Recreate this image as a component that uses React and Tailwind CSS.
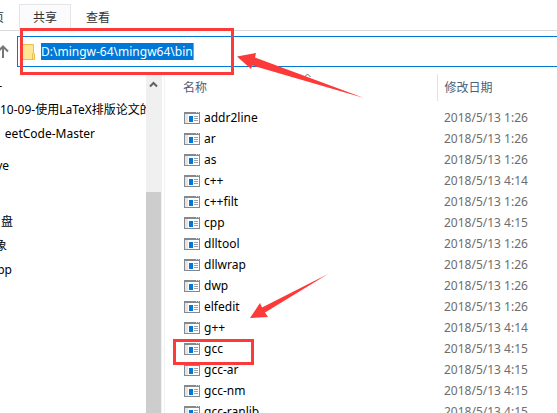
import React from 'react';

const files = [
  ['addr2line', '1:26'],
  ['ar', '1:26'],
  ['as', '1:26'],
  ['c++', '4:14'],
  ['c++filt', '1:26'],
  ['cpp', '4:15'],
  ['dlltool', '1:26'],
  ['dllwrap', '1:26'],
  ['dwp', '1:26'],
  ['elfedit', '1:26'],
  ['g++', '4:14'],
  ['gcc', '4:15'],
  ['gcc-ar', '4:15'],
  ['gcc-nm', '4:15'],
  ['gcc-ranlib', '4:15'],
];

function AppIcon() {
  return (
    <svg className="h-3 w-4 shrink-0" viewBox="0 0 16 12" shapeRendering="crispEdges" aria-hidden="true">
      <path fill="#83898e" d="M0 0h16v12H0z" />
      <path fill="#fff" d="M1 2h14v9H1z" />
      <path fill="#e3e5e7" d="M1 2h3v9H1z" />
      <path fill="#d5d8da" d="M12 0h1v1h-1zM14 0h1v1h-1z" />
      <path fill="#0078d7" d="M5 4h4v6H5z" />
      <path fill="#9da1a4" d="M10 4h4v1h-4zM10 6h4v1h-4zM10 8h4v1h-4z" />
    </svg>
  );
}

function FolderIcon() {
  return (
    <svg className="h-4 w-3 shrink-0" viewBox="0 0 12 16" aria-hidden="true">
      <path fill="#ffe694" d="M0 0h10v9h1v7H0z" />
      <path fill="none" stroke="#e8c14d" d="M0 .5h10.5v8.5l1 1v5.5H0M9.5 15V9.5h1" />
    </svg>
  );
}

function Ribbon() {
  return (
    <nav className="flex h-[31px] shrink-0 items-end border-b border-[#dadbdc] text-[#333]">
      <button className="flex h-[25px] w-[19px] items-center justify-end overflow-hidden pr-[15px] whitespace-nowrap">
        页
      </button>
      <button className="-mb-px flex h-[27px] w-[52px] items-center justify-center border border-b-0 border-[#e4e5e6] bg-[#fbfbfd]">
        共享
      </button>
      <button className="flex h-[25px] w-[54px] items-center justify-center">查看</button>
    </nav>
  );
}

function AddressBar() {
  return (
    <div className="flex shrink-0 pt-[5px]">
      <button aria-label="上移" className="flex w-[17px] shrink-0 items-center">
        <svg className="h-3.5 w-2.5" viewBox="0 0 10 14" fill="none" stroke="#777" strokeWidth="2" aria-hidden="true">
          <path d="M3 13V2M-2 6.5 3 1.5l5 5" />
        </svg>
      </button>
      <div className="flex h-[31px] grow items-center border border-r-0 border-[#0078d7] pl-[5px]">
        <FolderIcon />
        <input
          aria-label="地址"
          readOnly
          value="D:\mingw-64\mingw64\bin"
          className="ml-1.5 h-[17px] field-sizing-content border-r border-[#e38b3c] bg-[#0078d7] text-white outline-none"
        />
      </div>
    </div>
  );
}

function TreeItem({ width, children }) {
  return (
    <li className={`${width} flex h-6 items-center justify-end overflow-hidden whitespace-nowrap`}>{children}</li>
  );
}

function Sidebar() {
  return (
    <aside className="flex w-[165px] shrink-0 border-r border-[#f3f3f3]">
      <ul className="w-[146px] text-black">
        <TreeItem width="w-0.5">-</TreeItem>
        <li className="flex h-6 items-center overflow-hidden whitespace-nowrap">10-09-使用LaTeX排版论文的</li>
        <TreeItem width="w-[95px]">eetCode-Master</TreeItem>
        <li className="h-2" />
        <TreeItem width="w-[9px]">ve</TreeItem>
        <li className="h-8" />
        <TreeItem width="w-[13px]">盘</TreeItem>
        <TreeItem width="w-[7px]">象</TreeItem>
        <TreeItem width="w-3">pp</TreeItem>
      </ul>
      <div className="flex w-4 flex-col bg-[#f0f0f0] pr-px">
        <svg className="mx-auto mt-1.5 h-28 w-[9px]" viewBox="0 0 9 112" fill="none" stroke="#606060" strokeWidth="2" aria-hidden="true">
          <path d="M1 6.500 4.500 3 8 6.500" />
        </svg>
        <div className="grow bg-[#cdcdcd]" />
      </div>
    </aside>
  );
}

function FileList() {
  return (
    <main className="min-w-0 grow">
      <table className="w-full table-fixed border-collapse text-left">
        <colgroup>
          <col className="w-[272px]" />
          <col />
        </colgroup>
        <thead className="text-[#4c607a]">
          <tr className="h-[27px]">
            <th className="border-r border-[#e2e2e2] p-0 pl-[18px] font-normal">名称</th>
            <th className="p-0 pl-[7px] font-normal">修改日期</th>
          </tr>
        </thead>
        <tbody>
          <tr className="h-1.5"><td /></tr>
          {files.map(([name, time]) => (
            <tr key={name} className="h-[21px]">
              <td className="p-0 pl-[19px] text-black">
                <div className="flex items-center gap-1">
                  <AppIcon />
                  {name}
                </div>
              </td>
              <td className="p-0 pl-[7px] whitespace-nowrap text-[#6d6d6d]">2018/5/13 {time}</td>
            </tr>
          ))}
        </tbody>
      </table>
    </main>
  );
}

function Annotations() {
  return (
    <div className="pointer-events-none absolute inset-0" aria-hidden="true">
      <div className="absolute top-[28px] left-[20px] h-[47px] w-[214px] border-3 border-[#fc3a3a]" />
      <div className="absolute top-[339px] left-[173px] h-[26px] w-[81px] border-3 border-[#fc3a3a]" />
      <svg className="absolute top-0 left-0 h-[413px] w-[557px]" viewBox="0 0 557 413">
        <path fill="none" stroke="#666" d="m304.500 77 3-3 3 3" />
        <path fill="#fc3a3a" d="M237 56.500 256 53l-1 4.500L364 98 252.500 65.500 251 69zM250 318l10-15 2 4.500L328 274l-63 38.500 3 4.500z" />
      </svg>
    </div>
  );
}

export default function App() {
  return (
    <div className="relative flex h-screen flex-col overflow-hidden bg-white font-['Noto_Sans','Noto_Sans_CJK_SC',sans-serif] text-xs">
      <Ribbon />
      <AddressBar />
      <div className="flex min-h-0 grow pt-[7px]">
        <Sidebar />
        <FileList />
      </div>
      <Annotations />
    </div>
  );
}
